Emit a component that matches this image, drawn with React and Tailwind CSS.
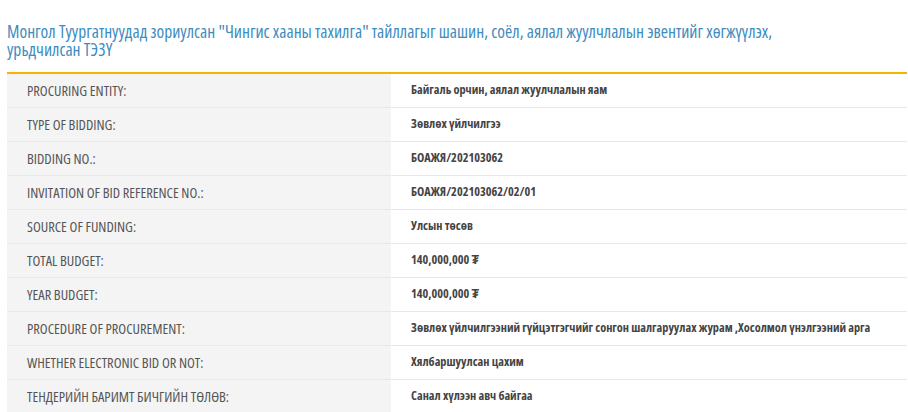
const rows = [
  ["PROCURING ENTITY:", "Байгаль орчин, аялал жуулчлалын яам"],
  ["TYPE OF BIDDING:", "Зөвлөх үйлчилгээ"],
  ["BIDDING NO.:", "БОАЖЯ/202103062"],
  ["INVITATION OF BID REFERENCE NO.:", "БОАЖЯ/202103062/02/01"],
  ["SOURCE OF FUNDING:", "Улсын төсөв"],
  ["TOTAL BUDGET:", "140,000,000 ₮"],
  ["YEAR BUDGET:", "140,000,000 ₮"],
  ["PROCEDURE OF PROCUREMENT:", "Зөвлөх үйлчилгээний гүйцэтгэгчийг сонгон шалгаруулах журам ,Хосолмол үнэлгээний арга"],
  ["WHETHER ELECTRONIC BID OR NOT:", "Хялбаршуулсан цахим"],
  ["ТЕНДЕРИЙН БАРИМТ БИЧГИЙН ТӨЛӨВ:", "Санал хүлээн авч байгаа"],
];

export default function App() {
  return (
    <div className="w-[908px] h-[412px] overflow-hidden bg-white pl-[7px] pr-px pt-[22px] font-['Open_Sans',sans-serif] font-stretch-condensed">
      <h1 className="text-[17.5px] leading-[18px] text-[#3e8cc0] pr-[120px] mb-[14px]">
        Монгол Туургатнуудад зориулсан "Чингис хааны тахилга" тайллагыг шашин, соёл, аялал жуулчлалын эвентийг хөгжүүлэх, урьдчилсан ТЭЗҮ
      </h1>
      <div className="border-t-2 border-[#f5b400]">
        {rows.map(([label, value]) => (
          <div key={label} className="flex h-[34px] border-b border-[#e8e8e8]">
            <div className="w-[384px] shrink-0 bg-[#f4f4f4] pl-[20px] flex items-center text-[14.4px] text-[#555]">
              {label}
            </div>
            <div className="flex-1 pl-[20px] flex items-center text-[12.3px] font-bold text-[#444]">
              {value}
            </div>
          </div>
        ))}
      </div>
    </div>
  );
}
